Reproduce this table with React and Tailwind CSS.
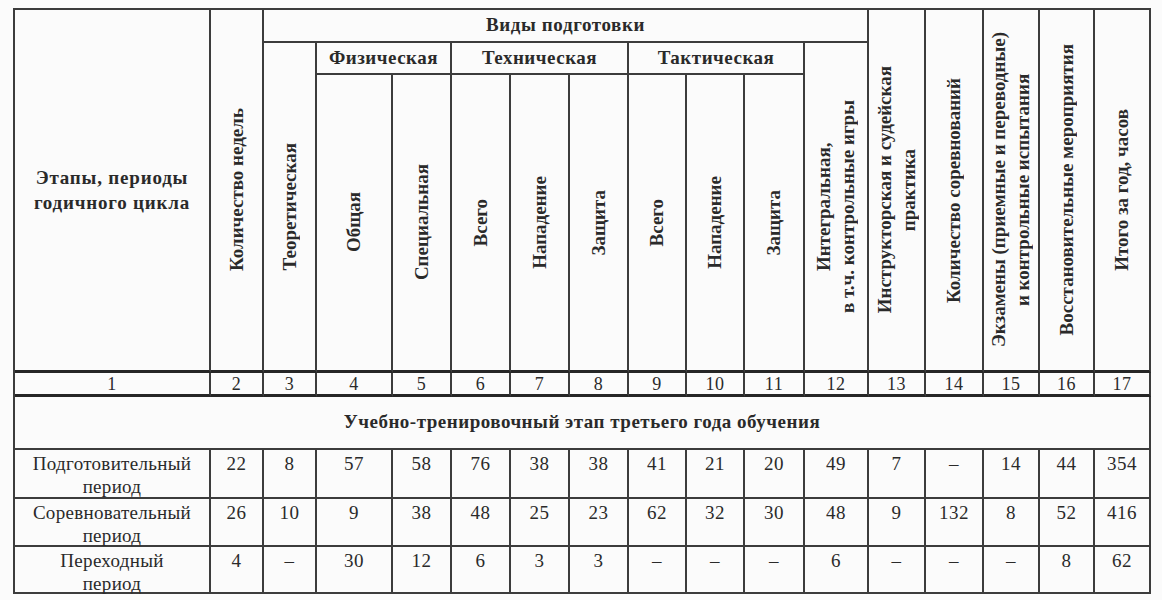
import React from "react";

function Cell({ pos, last = false, bottom = "n", className = "", children }) {
  const b =
    bottom === "thick" ? "border-b-[3px] border-b-[#262626]" : "border-b-2 border-b-[#3c3c3c]";
  return (
    <div className={`flex border-r-2 border-r-[#3c3c3c] ${b} ${pos} ${className}`}>{children}</div>
  );
}

function V({ children, className = "" }) {
  return (
    <span className={`[writing-mode:vertical-rl] rotate-180 text-center font-bold text-[19px] leading-[24px] ${className}`}>
      {children}
    </span>
  );
}

const rows = [
  { name: ["Подготовительный", "период"], v: ["22", "8", "57", "58", "76", "38", "38", "41", "21", "20", "49", "7", "–", "14", "44", "354"] },
  { name: ["Соревновательный", "период"], v: ["26", "10", "9", "38", "48", "25", "23", "62", "32", "30", "48", "9", "132", "8", "52", "416"] },
  { name: ["Переходный", "период"], v: ["4", "–", "30", "12", "6", "3", "3", "–", "–", "–", "6", "–", "–", "–", "8", "62"] },
];

export default function App() {
  return (
    <div className="min-h-[600px] w-[1162px] bg-[#fbfbfb] pt-[8px] pl-[13px] font-[family-name:'Liberation_Serif','Times_New_Roman',serif] text-[#2a2a2a]">
      <div className="grid w-max grid-cols-[196px_53px_53px_76px_59px_59px_59px_59px_58px_58px_60px_64px_57px_58px_56px_55px_56px] grid-rows-[33px_32px_298px_24px_53px_49px_48px_47px] border-l-2 border-t-2 border-[#3c3c3c]">
        {/* header */}
        <Cell pos="col-start-1 row-start-1 row-span-3" bottom="thick" className="items-center justify-center text-center">
          <span className="font-bold text-[19px] leading-[25px] tracking-[0.8px]">
            Этапы, периоды
            <br />
            годичного цикла
          </span>
        </Cell>
        <Cell pos="col-start-2 row-start-1 row-span-3" bottom="thick" className="items-center justify-center">
          <V>Количество недель</V>
        </Cell>
        <Cell pos="col-start-3 col-span-10 row-start-1" className="items-center justify-center">
          <span className="font-bold text-[19px] tracking-[0.6px]">Виды подготовки</span>
        </Cell>
        <Cell pos="col-start-13 row-start-1 row-span-3" bottom="thick" className="items-center justify-center">
          <V>
            Инструкторская и судейская
            <br />
            практика
          </V>
        </Cell>
        <Cell pos="col-start-14 row-start-1 row-span-3" bottom="thick" className="items-center justify-center">
          <V>Количество соревнований</V>
        </Cell>
        <Cell pos="col-start-15 row-start-1 row-span-3" bottom="thick" className="items-center justify-center">
          <V>
            Экзамены (приемные и переводные)
            <br />
            и контрольные испытания
          </V>
        </Cell>
        <Cell pos="col-start-16 row-start-1 row-span-3" bottom="thick" className="items-center justify-center">
          <V>Восстановительные мероприятия</V>
        </Cell>
        <Cell pos="col-start-17 row-start-1 row-span-3" last bottom="thick" className="items-center justify-center">
          <V>Итого за год, часов</V>
        </Cell>

        <Cell pos="col-start-3 row-start-2 row-span-2" bottom="thick" className="items-center justify-center">
          <V>Теоретическая</V>
        </Cell>
        <Cell pos="col-start-4 col-span-2 row-start-2" className="items-center justify-center">
          <span className="font-bold text-[19px] tracking-[0.5px]">Физическая</span>
        </Cell>
        <Cell pos="col-start-6 col-span-3 row-start-2" className="items-center justify-center">
          <span className="font-bold text-[19px] tracking-[0.5px]">Техническая</span>
        </Cell>
        <Cell pos="col-start-9 col-span-3 row-start-2" className="items-center justify-center">
          <span className="font-bold text-[19px] tracking-[0.5px]">Тактическая</span>
        </Cell>
        <Cell pos="col-start-12 row-start-2 row-span-2" bottom="thick" className="items-center justify-center">
          <V className="leading-[23px]">
            Интегральная,
            <br />
            в т.ч. контрольные игры
          </V>
        </Cell>

        <Cell pos="col-start-4 row-start-3" bottom="thick" className="items-center justify-center"><V>Общая</V></Cell>
        <Cell pos="col-start-5 row-start-3" bottom="thick" className="items-center justify-center"><V>Специальная</V></Cell>
        <Cell pos="col-start-6 row-start-3" bottom="thick" className="items-center justify-center"><V>Всего</V></Cell>
        <Cell pos="col-start-7 row-start-3" bottom="thick" className="items-center justify-center"><V>Нападение</V></Cell>
        <Cell pos="col-start-8 row-start-3" bottom="thick" className="items-center justify-center"><V>Защита</V></Cell>
        <Cell pos="col-start-9 row-start-3" bottom="thick" className="items-center justify-center"><V>Всего</V></Cell>
        <Cell pos="col-start-10 row-start-3" bottom="thick" className="items-center justify-center"><V>Нападение</V></Cell>
        <Cell pos="col-start-11 row-start-3" bottom="thick" className="items-center justify-center"><V>Защита</V></Cell>

        {/* number row */}
        {Array.from({ length: 17 }, (_, i) => (
          <Cell
            key={"n" + i}
            pos="row-start-4"
            last={i === 16}
            bottom="thick"
            className="items-center justify-center text-[18px] leading-none tracking-[0.5px]"
          >
            {i + 1}
          </Cell>
        ))}

        {/* section */}
        <Cell pos="col-start-1 col-span-17 row-start-5" last className="items-center justify-center">
          <span className="font-bold text-[19px] tracking-[0.5px]">
            Учебно-тренировочный этап третьего года обучения
          </span>
        </Cell>

        {/* data rows */}
        {rows.map((row, ri) => (
          <React.Fragment key={"r" + ri}>
            <Cell pos="col-start-1" className="justify-center text-center pt-[2px]">
              <span className="text-[19px] leading-[23px] tracking-[0.3px]">
                {row.name[0]}
                <br />
                {row.name[1]}
              </span>
            </Cell>
            {row.v.map((val, ci) => (
              <Cell
                key={"c" + ri + "-" + ci}
                last={ci === 15}
                className="justify-center pt-[2px] text-[19px] leading-[23px] tracking-[0.5px]"
              >
                {val}
              </Cell>
            ))}
          </React.Fragment>
        ))}
      </div>
    </div>
  );
}
